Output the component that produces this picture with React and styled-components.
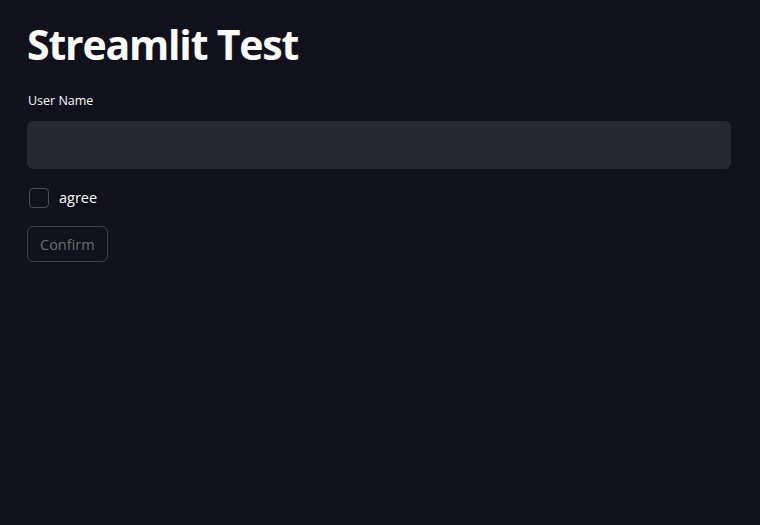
import React from "react";
import styled, { createGlobalStyle } from "styled-components";

const Global = createGlobalStyle`
  html, body { margin: 0; padding: 0; background: #10111a; }
  body { font-family: "Open Sans", "Noto Sans", sans-serif; color: #fafafa; }
  * { box-sizing: border-box; }
`;

const Page = styled.div`
  width: 760px;
  height: 525px;
  background: #10111a;
  padding: 18px 29px 0 27px;
  display: flex;
  flex-direction: column;
`;

const Title = styled.h1`
  margin: 0;
  font-size: 41px;
  font-weight: 700;
  line-height: 52px;
  letter-spacing: -1.2px;
  color: #fafafa;
`;

const Label = styled.label`
  margin-top: 22px;
  font-size: 12.5px;
  line-height: 18px;
  color: #fafafa;
  padding-left: 1px;
`;

const Input = styled.input`
  margin-top: 11px;
  height: 48px;
  width: 100%;
  background: #262730;
  border: 1px solid #262730;
  border-radius: 6px;
  color: #fafafa;
  font: inherit;
  font-size: 16px;
  padding: 0 12px;
  outline: none;
`;

const CheckRow = styled.label`
  margin-top: 18px;
  display: flex;
  align-items: center;
  gap: 10px;
  padding-left: 2px;
  font-size: 14.5px;
  line-height: 22px;
  color: #fafafa;
`;

const Box = styled.span`
  width: 20px;
  height: 20px;
  border: 1px solid rgba(250, 250, 250, 0.25);
  border-radius: 4px;
  background: transparent;
`;

const Button = styled.button`
  margin-top: 17px;
  align-self: flex-start;
  height: 36px;
  padding: 0 12px;
  background: transparent;
  border: 1px solid rgba(250, 250, 250, 0.2);
  border-radius: 6px;
  color: rgba(250, 250, 250, 0.4);
  font-family: inherit;
  font-size: 14.5px;
`;

export default function App() {
  return (
    <>
      <Global />
      <Page>
        <Title>Streamlit Test</Title>
        <Label>User Name</Label>
        <Input type="text" />
        <CheckRow>
          <Box />
          agree
        </CheckRow>
        <Button disabled>Confirm</Button>
      </Page>
    </>
  );
}
